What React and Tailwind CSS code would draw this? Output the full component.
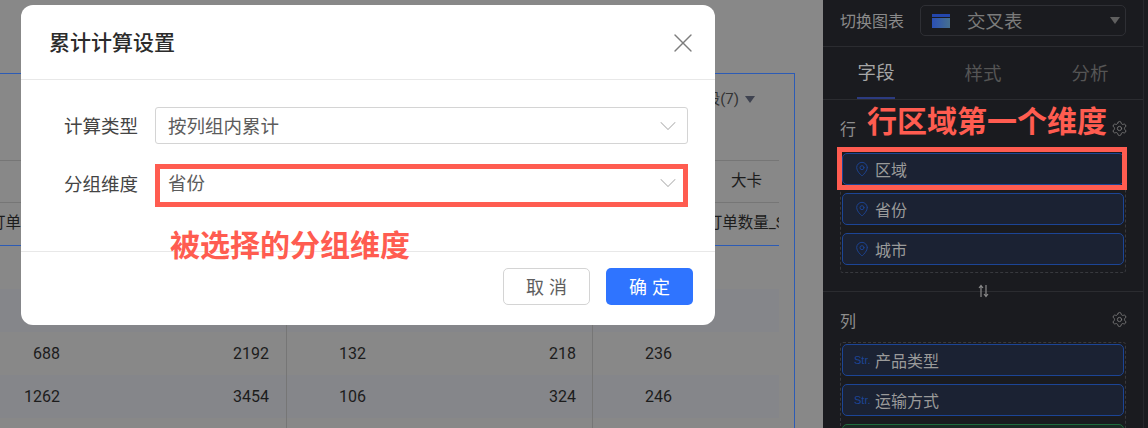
import { ChevronDown, MapPin, Settings, X } from "lucide-react"

const rows = [
  { band: true, cells: ["", "", "", "", "", ""] },
  { band: false, cells: ["688", "2192", "132", "218", "236", ""] },
  { band: true, cells: ["1262", "3454", "106", "324", "246", ""] },
  { band: false, cells: ["", "", "", "", "", ""] },
]

const gridCols = "grid grid-cols-[60px_226px_98px_208px_98px_89px]"

function DataRow({ band, cells }) {
  return (
    <div className={`${gridCols} h-[43px] items-stretch text-[16px] text-[#1c1c1c] ${band ? "bg-[#85868a]" : ""}`}>
      <div className="flex items-center justify-end">{cells[0]}</div>
      <div className="flex items-center justify-end pr-[17px]">{cells[1]}</div>
      <div className="flex items-center justify-end border-l border-[#767676] pr-[18px]">{cells[2]}</div>
      <div className="flex items-center justify-end pr-[16px]">{cells[3]}</div>
      <div className="flex items-center justify-end border-l border-[#767676] pr-[18px]">{cells[4]}</div>
      <div />
    </div>
  )
}

function Background() {
  return (
    <main className="w-[823px] shrink-0 bg-[#888888] pt-[73px] font-['Roboto','Noto_Sans_CJK_SC',sans-serif]">
      <div className="h-[355px] w-[795px] border-t border-r border-[#2c5bb5] pr-[15px]">
        <div className="flex h-[86px] items-start justify-end pt-[14px] pr-[24px] text-[15px] text-[#333333]">
          <span>段(7)</span>
          <span className="mt-[8px] ml-[6px] h-0 w-0 border-x-[5.5px] border-t-[7px] border-x-transparent border-t-[#3f4350]" />
        </div>
        <div className="flex h-[43px] items-center justify-end border-y border-[#767676] pr-[17px] text-[15.5px] text-[#1c1c1c]">大卡</div>
        <div className="flex h-[43px] items-center justify-between overflow-hidden border-b border-[#2c5bb5] text-[15.5px] whitespace-nowrap text-[#1c1c1c]">
          <span className="ml-[-10px]">订单</span>
          <span className="mr-[-6px]">订单数量_S</span>
        </div>
        <div className="h-[43px]" />
        {rows.map((row, i) => <DataRow key={i} band={row.band} cells={row.cells} />)}
      </div>
    </main>
  )
}

function SelectBox({ value, bare }) {
  return (
    <div className={`flex h-[37px] w-[533px] items-center justify-between rounded-[3px] border pr-[5px] pl-[12px] text-[18.5px] text-[#5c5c5c] ${bare ? "border-transparent" : "border-[#d4d4d4]"}`}>
      <span>{value}</span>
      <ChevronDown size={28} strokeWidth={0.9} className="text-[#b5b5b5]" />
    </div>
  )
}

function Modal() {
  return (
    <section className="absolute top-[5px] left-[21px] flex h-[320px] w-[694px] flex-col rounded-[12px] bg-white">
      <header className="flex h-[75px] shrink-0 items-center justify-between border-b border-[#e8e8e8] pr-[16px] pl-[28px]">
        <h2 className="text-[21px] font-medium text-[#2b2b2b]">累计计算设置</h2>
        <X size={32} strokeWidth={1} className="mt-[2px] text-[#7d7d7d]" />
      </header>

      <div className="relative h-[171px] shrink-0 pt-[27px] pl-[43px]">
        <div className="flex items-center gap-[17px]">
          <label className="w-[74px] text-[18.5px] whitespace-nowrap text-[#444444]">计算类型</label>
          <SelectBox value="按列组内累计" />
        </div>
        <div className="mt-[20px] flex items-center gap-[17px]">
          <label className="w-[74px] pt-[3px] text-[18.5px] whitespace-nowrap text-[#444444]">分组维度</label>
          <div className="relative">
            <SelectBox value="省份" bare />
            <div className="absolute top-0 left-0 h-[43px] w-[533px] border-[5px] border-[#ff5c50]" />
          </div>
        </div>
        <span className="absolute top-[141px] left-[149px] text-[30px] leading-[44px] font-bold whitespace-nowrap text-[#ff5c50]">被选择的分组维度</span>
      </div>

      <footer className="flex flex-1 items-start justify-end gap-[16px] border-t border-[#e8e8e8] pt-[16px] pr-[22px]">
        <button className="flex h-[37px] w-[87px] items-center justify-center rounded-[5px] border border-[#d4d4d4] pl-[5px] text-[18px] tracking-[5px] text-[#5e5e5e]">取消</button>
        <button className="flex h-[37px] w-[87px] items-center justify-center rounded-[5px] bg-[#2f74ff] pl-[5px] text-[18px] tracking-[5px] text-white">确定</button>
      </footer>
    </section>
  )
}

function PillIcon({ str }) {
  if (str) return <span className="w-[20px] font-['Liberation_Sans',sans-serif] text-[11px] text-[#1c4596]">Str.</span>
  return <MapPin size={16} strokeWidth={1.4} className="mr-[4px] text-[#1c4596]" />
}

function Pill({ label, str }) {
  return (
    <div className="flex h-[32px] items-center gap-[1px] rounded-[5px] border border-[#1c4596] bg-[#1b2233] pl-[11px] text-[16px] text-[#9a9a9a]">
      <PillIcon str={str} />
      <span>{label}</span>
    </div>
  )
}

function SectionTitle({ title, className }) {
  return (
    <div className={`flex items-center justify-between pt-[5px] text-[16px] text-[#8e8e8e] ${className}`}>
      <span>{title}</span>
      <Settings size={17} strokeWidth={1.3} className="mr-[-2px] text-[#777777]" />
    </div>
  )
}

function Panel() {
  return (
    <aside className="relative h-[428px] flex-1 bg-[#1a1b1f] font-['Noto_Sans_CJK_SC',sans-serif]">
      <div className="h-full w-[321px] border-r border-[#26272b]">
        <div className="flex h-[47px] items-start gap-[16px] border-b border-[#2b2c30] pt-[5px] pr-[17px] pl-[17px]">
          <span className="h-[31px] text-[16px] leading-[31px] whitespace-nowrap text-[#8a8a8a]">切换图表</span>
          <div className="flex h-[31px] flex-1 items-center rounded-[5px] border border-[#2e2f34] pr-[5px] pl-[11px]">
            <svg width="18" height="14" viewBox="0 0 18 14">
              <defs>
                <linearGradient id="tableFill" x1="0" y1="0" x2="1" y2="0">
                  <stop offset="0" stopColor="#2a4fb5" />
                  <stop offset="1" stopColor="#46708f" />
                </linearGradient>
              </defs>
              <rect width="18" height="3" fill="#2346ad" />
              <rect y="4" width="18" height="10" fill="url(#tableFill)" />
            </svg>
            <span className="ml-[17px] flex-1 text-[18.5px] text-[#7b7b7b]">交叉表</span>
            <span className="h-0 w-0 border-x-[5.5px] border-t-[7px] border-x-transparent border-t-[#5f5f5f]" />
          </div>
        </div>

        <div className="flex h-[53px] gap-[69px] border-b border-[#2b2c30] pl-[34px] text-[18.5px]">
          <div className="flex h-full w-[38px] items-center justify-center border-b-2 border-[#2c3b80] whitespace-nowrap text-[#a6a6a6]">字段</div>
          <div className="flex h-full w-[38px] items-center justify-center whitespace-nowrap text-[#555555]">样式</div>
          <div className="flex h-full w-[38px] items-center justify-center whitespace-nowrap text-[#555555]">分析</div>
        </div>

        <div className="pr-[17px] pl-[17px]">
          <SectionTitle title="行" className="h-[51px]" />
          <div className="flex flex-col gap-[8px] rounded-[3px] border border-dashed border-[#38393e] px-px pt-px pb-[7px]">
            <Pill label="区域" />
            <Pill label="省份" />
            <Pill label="城市" />
          </div>
        </div>

        <div className="mt-[18px] border-t border-[#2b2c30] pr-[17px] pl-[17px]">
          <SectionTitle title="列" className="h-[50px]" />
          <div className="flex flex-col gap-[8px] rounded-[3px] border border-dashed border-[#38393e] px-px pt-px">
            <Pill label="产品类型" str />
            <Pill label="运输方式" str />
            <div className="h-[32px] rounded-[5px] border border-[#1f6b3c] bg-[#1a2a24]" />
          </div>
        </div>
      </div>

      {/* annotations and the swap arrows sit over the field list */}
      <span className="absolute top-[97px] left-[44px] text-[30px] leading-[44px] font-bold whitespace-nowrap text-[#ff5c50]">行区域第一个维度</span>
      <div className="absolute top-[147px] left-[14px] h-[43px] w-[290px] border-[5px] border-[#ff5c50]" />
      <svg className="absolute top-[284px] left-[155px]" width="11" height="14" viewBox="0 0 11 14" fill="none" stroke="#8a8a8a" strokeWidth="1.2">
        <path d="M3 13V1.5M1 4l2-2.5L5 4" />
        <path d="M8 1v11.5M6 10l2 2.5L10 10" />
      </svg>
    </aside>
  )
}

export default function App() {
  return (
    <div className="relative flex h-[428px] w-[1148px] overflow-hidden font-['Noto_Sans_CJK_SC',sans-serif]">
      <Background />
      <Panel />
      <Modal />
    </div>
  )
}
